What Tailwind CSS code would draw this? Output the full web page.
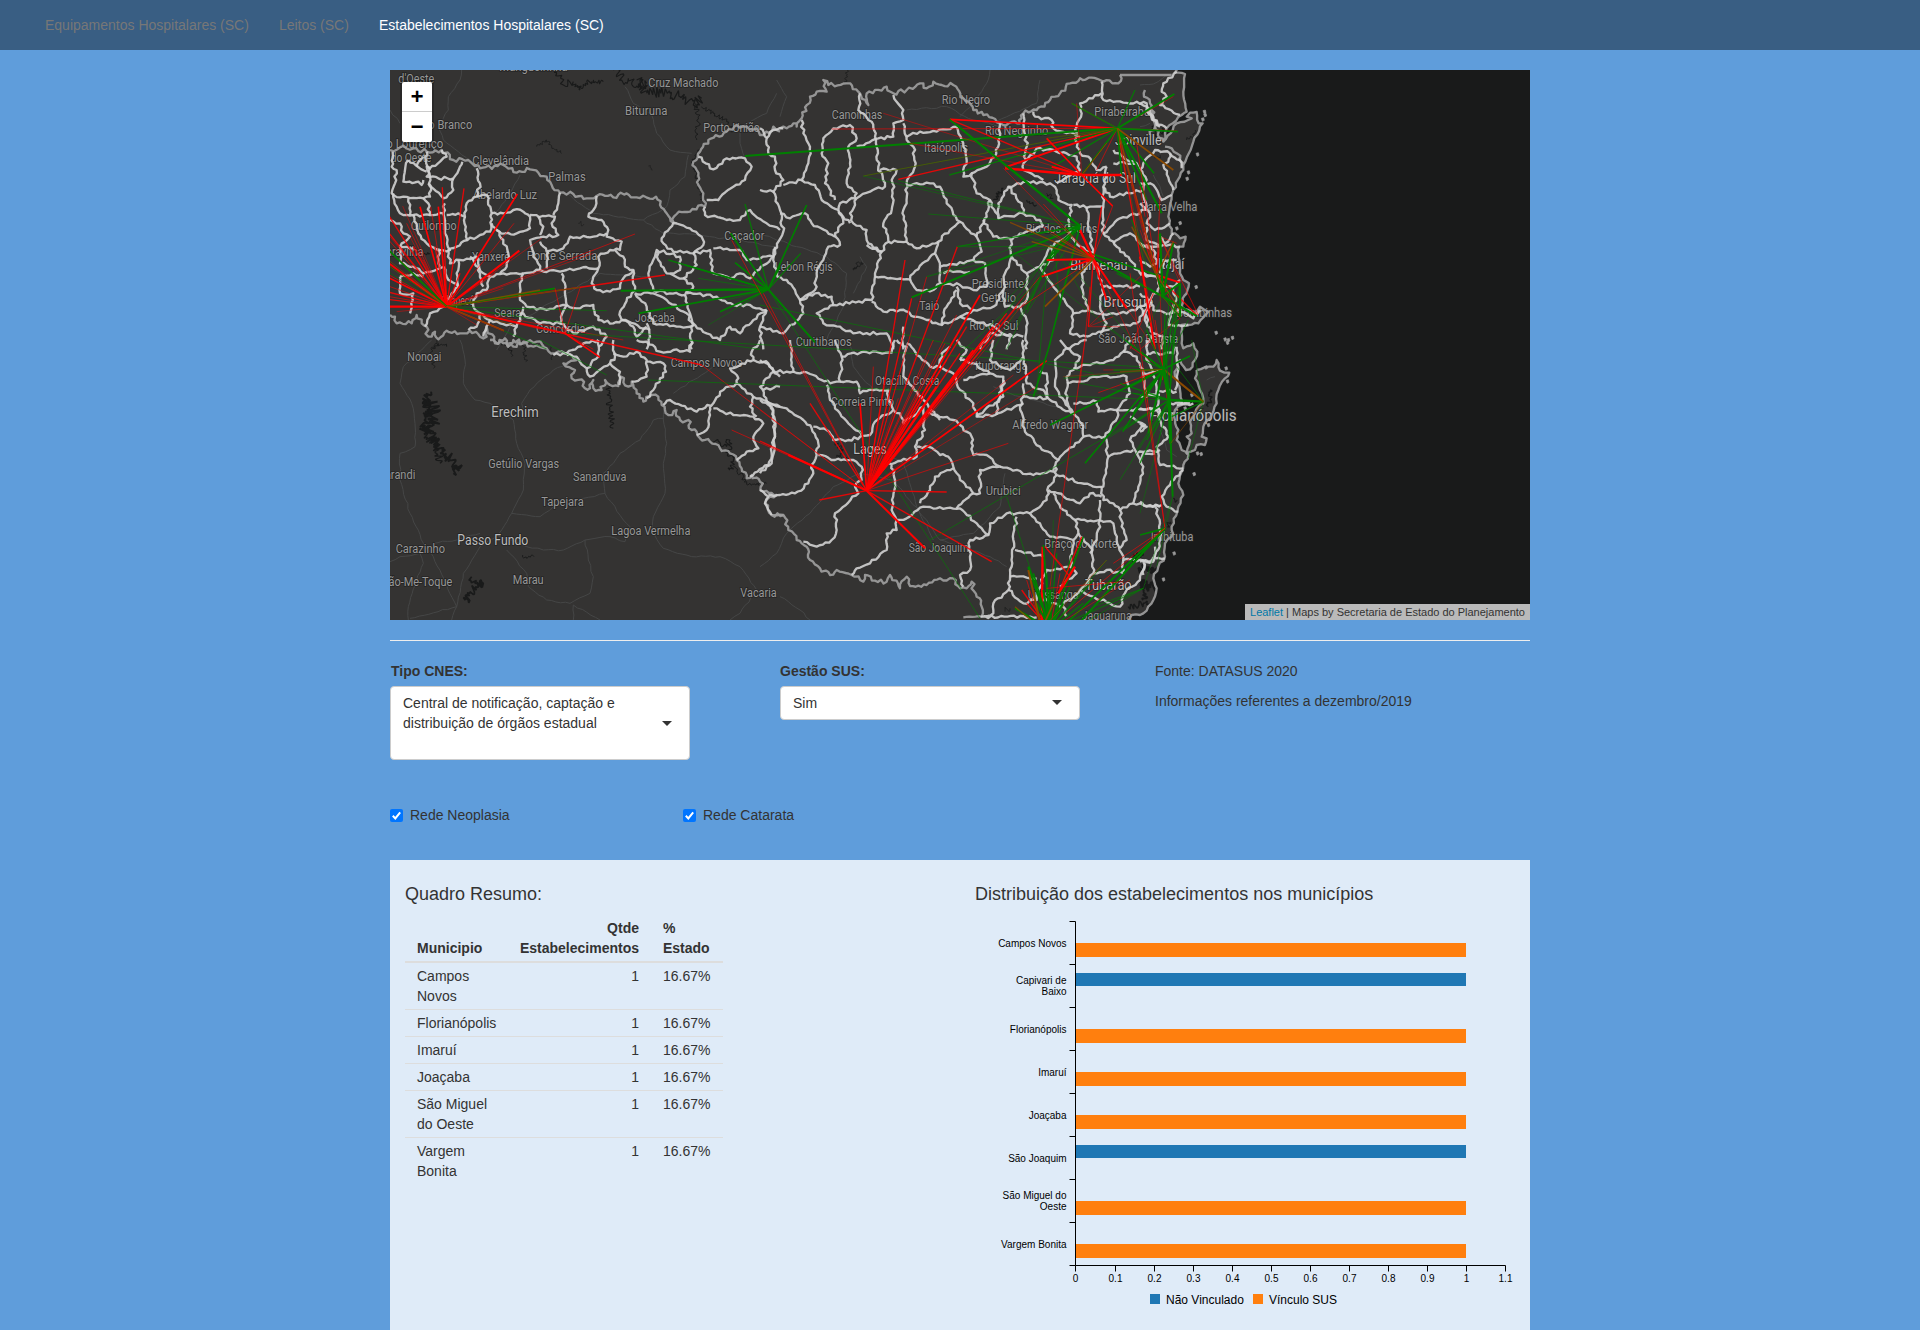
<!DOCTYPE html>
<html lang="pt-BR">
<head>
<meta charset="utf-8">
<title>Estabelecimentos Hospitalares (SC)</title>
<script src="https://cdn.jsdelivr.net/npm/@tailwindcss/browser@4"></script>
</head>
<body class="bg-[#5f9ddb] h-[1330px] overflow-hidden font-['Liberation_Sans',Arial,sans-serif] text-sm leading-5 text-[#333]">
<nav class="h-[50px] bg-[#395e83] flex items-center pl-[30px] text-[#777]">
  <a class="px-[15px]">Equipamentos Hospitalares (SC)</a>
  <a class="px-[15px]">Leitos (SC)</a>
  <a class="px-[15px] text-white">Estabelecimentos Hospitalares (SC)</a>
</nav>
<main class="w-[1140px] mx-auto pt-5">
  <section class="relative h-[550px] bg-[#191a1a] overflow-hidden">
    <svg id="map" class="block" width="1140" height="550" viewBox="30 30 3420 1650"></svg>
    <div class="absolute left-3 top-3 w-[30px] rounded-[2px] bg-white text-black shadow-[0_0_0_2px_rgba(0,0,0,0.2)] flex flex-col font-['Liberation_Mono',monospace] font-bold text-[22px]">
      <div class="h-[30px] border-b border-[#ccc] flex items-center justify-center pt-1">+</div>
      <div class="h-[30px] flex items-center justify-center pt-1">−</div>
    </div>
    <div class="absolute right-0 bottom-0 h-4 bg-white/70 px-[5px] text-[11px] leading-4 whitespace-nowrap"><a class="text-[#0078a8]">Leaflet</a> | Maps by Secretaria de Estado do Planejamento</div>
  </section>
  <hr class="mt-5 border-t border-[#eee]">
  <section class="flex pt-5">
    <div class="w-[390px]">
      <div class="font-bold mb-[5px] pl-px">Tipo CNES:</div>
      <div class="w-[300px] h-[74px] bg-white border border-[#ccc] rounded flex items-center justify-between pl-3 pr-[17px]">
        <div class="w-[230px] h-[60px]">Central de notificação, captação e distribuição de órgãos estadual</div>
        <svg width="10" height="5"><path d="M0 0H10L5 5Z" fill="#333"/></svg>
      </div>
    </div>
    <div class="w-[375px]">
      <div class="font-bold mb-[5px]">Gestão SUS:</div>
      <div class="w-[300px] h-[34px] bg-white border border-[#ccc] rounded flex items-center justify-between pl-3 pr-[17px]">
        <div>Sim</div>
        <svg width="10" height="5" class="mb-px"><path d="M0 0H10L5 5Z" fill="#333"/></svg>
      </div>
    </div>
    <div>
      <p class="mb-[10px]">Fonte: DATASUS 2020</p>
      <p>Informações referentes a dezembro/2019</p>
    </div>
  </section>
  <section class="flex mt-[45px] h-5">
    <label class="w-[293px] flex items-center gap-[7px]"><svg width="13" height="13" viewBox="0 0 13 13"><rect width="13" height="13" rx="2" fill="#0075ff"/><path d="M2.8 6.8L5.3 9.4L10.2 3.3" fill="none" stroke="#fff" stroke-width="2"/></svg>Rede Neoplasia</label>
    <label class="flex items-center gap-[7px]"><svg width="13" height="13" viewBox="0 0 13 13"><rect width="13" height="13" rx="2" fill="#0075ff"/><path d="M2.8 6.8L5.3 9.4L10.2 3.3" fill="none" stroke="#fff" stroke-width="2"/></svg>Rede Catarata</label>
  </section>
  <section class="mt-[35px] h-[480px] bg-[#dfebf8] flex px-[15px] pt-6">
    <div class="w-[570px]">
      <h4 class="text-lg leading-5">Quadro Resumo:</h4>
      <table class="mt-[11px] w-[318px] table-fixed border-collapse">
        <colgroup><col class="w-[102px]"><col class="w-[144px]"><col class="w-[72px]"></colgroup>
        <thead><tr class="border-b-2 border-[#ddd] align-bottom">
          <th class="text-left px-3 py-[3px]">Municipio</th><th class="text-right px-3 py-[3px]">Qtde Estabelecimentos</th><th class="text-left pl-3 py-[3px]">%<br>Estado</th></tr></thead>
        <tbody id="rows" class="align-top"></tbody>
      </table>
    </div>
    <div class="w-[540px]">
      <h4 class="text-lg leading-5">Distribuição dos estabelecimentos nos municípios</h4>
      <svg id="chart" class="block mt-[6px]" width="555" height="420" viewBox="975 910 555 420" font-size="10"></svg>
    </div>
  </section>
</main>
<script>
const NS='http://www.w3.org/2000/svg';
function el(parent,name,attrs,text){const e=document.createElementNS(NS,name);for(const k in attrs)e.setAttribute(k,attrs[k]);if(text!=null)e.textContent=text;parent.appendChild(e);return e}

/* ---- summary table ---- */
['Campos Novos','Florianópolis','Imaruí','Joaçaba','São Miguel do Oeste','Vargem Bonita'].forEach((n,i)=>{
  const tr=document.createElement('tr');
  if(i)tr.className='border-t border-[#ddd]';
  tr.innerHTML='<td class="px-3 py-[3px]">'+n+'</td><td class="px-3 py-[3px] text-right">1</td><td class="pl-3 py-[3px]">16.67%</td>';
  document.getElementById('rows').appendChild(tr);
});

/* ---- bar chart ---- */
const chart=document.getElementById('chart');
[['Campos Novos',1],['Capivari de|Baixo',0],['Florianópolis',1],['Imaruí',1],['Joaçaba',1],['São Joaquim',0],['São Miguel do|Oeste',1],['Vargem Bonita',1]].forEach(([n,sus],i)=>{
  const y=921.5+43*i,parts=n.split('|');
  parts.forEach((p,j)=>el(chart,'text',{x:1066.5,y:parts.length>1?y+19.5+11*j:y+25.5,'text-anchor':'end',fill:'#000'},p));
  el(chart,'rect',{x:1076,y:sus?y+21.5:y+8.5,width:390,height:sus?14:13,fill:sus?'#ff7f0e':'#1f77b4'});
});
let axis='M1069.5 921.5H1075.5V1265.5H1069.5M1075.5 1271.5V1265.5H1505.5V1271.5';
for(let i=1;i<8;i++)axis+='M1069.5 '+(921.5+43*i)+'H1075.5';
for(let i=0;i<=11;i++){const x=i==0?1075.5:i==11?1505.5:Math.ceil(1075+39.09*i)+.5;if(i&&i<11)axis+='M'+x+' 1265.5V1271.5';el(chart,'text',{x:x,y:1282,'text-anchor':'middle',fill:'#000'},String(i/10))}
el(chart,'path',{d:axis,fill:'none',stroke:'#000'});
el(chart,'rect',{x:1150,y:1294,width:10,height:10,fill:'#1f77b4'});
el(chart,'text',{x:1166,y:1304,'font-size':12,fill:'#000'},'Não Vinculado');
el(chart,'rect',{x:1253,y:1294,width:10,height:10,fill:'#ff7f0e'});
el(chart,'text',{x:1269,y:1304,'font-size':12,fill:'#000'},'Vínculo SUS');

/* ---- map: six tiles, each with its own origin ---- */
const map=document.getElementById('map');
const off={A:[0,0],B:[1140,0],C:[2280,0],D:[0,840],E:[1140,840],F:[2280,840]};
let seed=7;const rnd=()=>(seed=(seed*16807)%2147483647)/2147483647-.5;
const pts=(s,t)=>s.trim().split(/\s+/).map(p=>{const q=p.split(',');return[+q[0]+off[t][0],+q[1]+off[t][1]]});
function rough(p,amp,step){const o=[p[0]];for(let i=1;i<p.length;i++){const[a,b]=p[i-1],[c,d]=p[i],L=Math.hypot(c-a,d-b),n=Math.max(1,Math.round(L/step));for(let k=1;k<n;k++){const f=k/n,r=rnd()*amp*2;o.push([a+(c-a)*f-(d-b)/L*r,b+(d-b)*f+(c-a)/L*r])}o.push(p[i])}return o}
const dOf=p=>'M'+p.map(q=>q[0].toFixed(1)+','+q[1].toFixed(1)).join('L');

const coast=[...pts('110,0 110,30 105,38 135,42 130,95 140,155 125,165 80,205 70,245 110,190 155,175 140,170 150,158 170,156 176,190 188,190 160,245 130,315 130,330 100,390 95,405 85,470 95,520 105,520 120,535 137,530 130,560 118,560 115,590 120,640 130,660 147,670 140,700 128,715 125,740 165,760 180,740 205,755 175,790 145,795 125,795 125,850 130,865 160,850','C'),
...pts('160,10 172,35 165,60 150,88 138,90 120,60 112,70 105,110 120,150 125,195 105,210 105,240 115,270 110,300 125,330 145,345 130,375 125,395 115,430 130,465 115,500 112,515 95,560 95,590 75,610 75,650 55,680 40,715 50,745 40,780 10,820 0,825','F'),...pts('1115,825 1100,860','E')];
const isle=pts('170,90 220,80 230,60 240,92 268,98 255,115 235,150 230,190 215,225 190,260 185,290 200,295 195,315 170,315 165,330 140,340 150,300 140,290 155,280 150,245 165,220 175,200 190,190 180,150 165,115 170,90','F');
const coastR=rough(coast,3.5,12),isleR=rough(isle,3.5,12);
el(map,'path',{d:dOf([[0,0],...coastR,[0,1720]]),fill:'#343332'});
el(map,'path',{d:dOf(isleR),fill:'#343332'});

/* roads */
const roads={A:'245,30 240,60 205,110 205,150 175,200 190,240 280,310|735,80 760,130 815,165 830,220 870,270 935,280|30,150 60,190|925,285 915,350 870,390 860,440 790,480 640,460 560,400|790,480 850,520 960,525 1190,560|1190,100 1160,160 1080,200 1080,250 1095,295|350,870 390,800 560,700 660,640 800,650|420,345 390,400 340,470',B:'0,520 110,560 200,590 260,640 250,740 200,840|50,60 80,110 60,170|690,30 680,70 640,130 600,170|300,590 320,620 280,700|840,60 830,130 700,190|440,150 560,140 640,180 760,210 900,220',C:'40,345 60,380 70,410|0,75 40,72 80,45|0,200 30,190',
D:'155,0 125,30 70,80 60,130 95,190 105,250 105,320 60,340 60,420 90,520 130,610 160,650 230,800 215,840|30,665 60,650 120,640 130,670 110,720 85,800 85,840|240,0 255,60 250,130 285,180 330,190 400,240 410,310 435,370 430,450 395,520 350,590 300,620 250,700 230,800 90,835|395,520 440,525 480,530 520,500 610,475 675,460|850,235 820,240 780,300 720,340 700,370 670,400 675,460 730,540 750,560 735,605 690,590 615,600 550,630 490,630 440,620 350,585|850,190 850,240 860,310 850,370 855,460 820,530 815,570 850,625 935,650 1020,650 1080,680 1130,750 1080,820 1050,840|615,600 625,660 640,710 630,760 570,790 500,780 445,740 440,700 380,630|580,795 580,840|580,795 660,840|430,240 425,190 450,150 520,90 600,50|160,610 230,600 300,580|880,160 940,120 1000,80',E:'0,680 50,640 80,580 150,520 220,440 300,400 400,420 500,540 540,600 690,650 740,680|270,0 280,80 340,150|360,330 430,370 470,500 520,600|540,600 640,580 720,500 735,400|60,770 120,810 150,840|890,200 780,170 700,140',F:'60,270 80,330 110,350|20,700 60,640|200,120 225,110'};
for(const t in roads)roads[t].split('|').forEach(s=>el(map,'path',{d:dOf(rough(pts(s,t),2.5,15)),fill:'none',stroke:'#454646','stroke-width':3,'stroke-linejoin':'round'}));

/* rivers, reservoirs, lagoons */
const water=[['A','530,30 550,75 580,65 600,90 640,60 670,65',14,6],['A','700,30 725,60 745,55 760,80 800,70',20,6],['A','770,60 800,100 860,95 900,110 940,135 965,115',22,7],['A','945,130 955,170 950,240',10,5],['A','965,140 1000,160 1040,185 1060,215',9,5],['A','470,260 500,240 515,260 545,280',6,4],['A','805,318 818,330',7,3],['A','595,490 612,492',9,3],['A','120,580 150,580',8,6],['A','960,270 935,310 965,400 970,435',8,5],['A','155,868 175,850 200,860',9,5],['D','155,155 130,190 150,210 130,250 150,280 175,310 190,340 220,360 240,385 220,400',22,10],['D','145,180 155,230 140,280',38,10],['D','140,280 175,330 180,370',22,7],['D','175,0 155,30 160,85',7,4],['D','330,0 390,15 395,50',8,5],['D','430,10 437,65',8,4],['D','512,20 516,60',4,4],['D','685,140 690,200 700,265',13,6],['D','428,645 440,655 462,650',8,5],['D','275,710 290,730 310,730 270,755 255,780 270,780',17,9],['D','1000,305 1040,320 1050,300 1045,340 1060,365 1050,390',14,6],['D','1060,380 1100,425 1110,430 1160,430',10,5],['E','0,430 15,432',11,4],['E','225,310 250,330 230,350 270,365',12,5],['E','735,815 750,805',14,4],['E','1120,650 1150,640 1120,670',16,8],['E','1105,800 1150,790 1170,800',14,8],['E','1140,700 1165,680 1190,700 1195,740 1160,745 1140,730',22,12],['F','0,720 20,735 10,780',20,10],['F','210,150 212,175 205,200',11,8],['F','100,475 112,480',16,6],['F','80,560 90,545',12,6],['B','730,385 700,420',12,7],['B','800,420 830,435',9,6],['B','860,400 880,415',8,5],['B','280,630 295,605 310,610 280,630',7,4],['B','262,30 255,70',6,4],['C','140,240 160,230 165,210',8,5],['C','35,200 60,225 80,210',17,6],['C','45,295 60,285',10,4]];
water.forEach(([t,s,a,w])=>el(map,'path',{d:dOf(rough(pts(s,t),a*.8,3.5)),fill:'none',stroke:'#191a1a','stroke-width':w*.55,'stroke-linejoin':'bevel'}));

/* place names: tile, text, x, baseline, width, size */
const labels=[['A',"d'Oeste",55,66,108],['A','Mangueirinha',358,32,205],['A','Cruz Machado',805,78,210],['A','Bituruna',735,164,127],['A','Porto União',970,213,170],['A','Pato Branco',95,206,182],['A','São Lourenço',-20,262,210],['A','do Oeste',32,304,122],['A','Clevelândia',277,312,170],['A','Palmas',505,361,112],['A','Abelardo Luz',278,414,193],['A','Quilombo',92,507,138],['A','Maravilha',-10,585,140],['A','Xanxerê',275,600,115],['A','Ponte Serrada',440,597,212],['A','Chapecó',182,734,100],['A','Seara',343,770,80],['A','Concórdia',468,818,148],['A','Joaçaba',765,783,120],['A','Caçador',1033,538,120],
['B','Canoinhas',215,174,152],['B','Rio Negro',545,131,145],['B','Itaiópolis',492,273,132],['B','Rio Negrinho',675,223,190],['B','Pirabeiraba',1003,167,167],['B','Joinville',1065,254,140,42],['B','Jaraguá do Sul',883,367,245,42],['B','Rio dos Cedros',797,517,215],['B','Blumenau',930,629,173,42],['B','Presidente',635,682,157],['B','Getúlio',663,724,105],['B','Brusque',1030,738,150,42],['B','Lebon Régis',45,632,173],['B','Taió',478,748,60],['B','Rio do Sul',628,808,147],['B','Curitibanos',107,857,168],['B','São João Batista',1015,847,240],['B','Barra Velha',1142,452,170],['C','Itajaí',55,624,78,42],['C','Bombinhas',108,770,168],
['D','Nonoai',82,62,102],['D','Erechim',334,230,142,42],['D','Getúlio Vargas',325,383,212],['D','Sananduva',579,422,160],['D','Sarandi',-5,416,111],['D','Tapejara',484,496,127],['D','Passo Fundo',232,612,213,42],['D','Lagoa Vermelha',694,583,237],['D','Carazinho',47,638,148],['D','Não-Me-Toque',2,737,215],['D','Marau',398,731,93],['D','Vacaria',1081,770,109],['D','Campos Novos',872,80,215],
['E','Ituporanga',645,88,157],['E','Otacílio Costa',345,132,193],['E','Correia Pinto',212,197,190],['E','Lages',280,340,100,42],['E','Urubici',677,462,105],['E','Alfredo Wagner',757,265,228],['E','São Joaquim',446,634,180],['E','Braço do Norte',853,621,220],['E','Tubarão',975,747,140,42],['E','Urussanga',803,774,153],['E','Jaguaruna',965,837,150],['F','Florianópolis',28,242,262,50],['F','Imbituba',32,602,128]];
labels.forEach(([t,s,x,y,w,z])=>el(map,'text',{x:x+off[t][0],y:y+2+off[t][1],textLength:w,lengthAdjust:'spacingAndGlyphs','font-size':z||36,'font-family':'Roboto, sans-serif',fill:z?'#bdbdbd':'#979797',stroke:'#242424','stroke-width':5,'paint-order':'stroke'},s));

/* state outline */
const outline={A:['30,270 60,262 100,265 140,275 185,270 220,300 265,300 300,325 370,315 410,338 450,328 500,350 515,375 540,398 580,402 620,415 650,408 700,412 740,400 770,412 828,410 840,435 860,460 880,488 890,462 930,455 965,435 975,440 970,400 955,375 950,330 940,305 960,275 985,240 1040,215 1070,195 1100,200 1130,205 1140,225 1170,220 1180,200 1200,215','30,765 45,770 50,790 95,790 110,765 125,790 140,800 145,830 165,815 175,838 200,812 240,820 270,812 300,830 320,830 320,800 345,850 375,835 385,860 400,840 430,850 460,860 500,865'],
B:['60,205 80,205 100,190 110,200 125,175 150,110 170,95 200,95 190,60 205,75 260,70 300,100 325,135 320,100 380,80 400,100 440,90 480,70 500,85 520,65 545,75 580,75 610,115 640,150 670,165 720,190 780,190 790,160 830,150 870,120 900,100 930,70 960,55 1020,60 1030,65 1075,70 1080,45','1080,45 1082,45 1235,45'],
D:['330,0 370,10 400,20 430,5 470,5 500,25 525,40 555,40 575,45 590,60 550,70 585,90 575,115 605,118 615,145 630,145 640,120 640,145 665,150 675,120 690,135 715,138 722,110 745,140 755,125 770,160 790,185 815,165 835,170 845,195 865,225 890,210 900,240 925,240 935,270 950,275 960,295 990,305 1020,325 1050,340 1070,360 1085,385 1100,415 1115,405 1140,425 1150,455 1190,465 1170,470 1155,490 1175,525 1210,525'],
E:['35,525 70,525 85,570 110,600 140,620 150,660 180,685 210,705 230,690 275,705 310,725 315,705 345,722 380,725 390,705 420,745 440,710 450,738 500,735 540,715 580,715 600,745 620,745 635,725 650,770 665,800 665,830 610,832'],
C:['15,90 12,110 30,130 40,170 45,200 70,245','35,150 45,200 30,225','75,260 110,280 120,300','120,290 125,320']};
const gO=el(map,'g',{fill:'none',stroke:'#a0a0a0','stroke-opacity':.9,'stroke-width':7,'stroke-linejoin':'round'});
for(const t in outline)outline[t].forEach((s,i)=>el(gO,'path',{d:dOf(rough(pts(s,t),t=='B'&&i==1?0:7,9))}));
el(gO,'path',{d:dOf(coastR)});el(gO,'path',{d:dOf(isleR)});
[[193,155],[195,165],[188,178],[172,283],[145,337],[141,356],[120,489],[110,505],[168,681],[228,818],[255,838],[262,848],[277,833],[258,925],[262,964],[205,1095],[183,1182],[172,1180],[162,1242],[102,1480],[70,1558],[135,1045],[155,1005],[198,922],[265,840]].forEach(([x,y])=>el(map,'path',{d:`M${x+2276},${y-3}l7,-2l2,8l-6,3z`,fill:'#999',stroke:'#999','stroke-width':2}));

/* municipality borders */
const inner={A:`38,275 35,320 50,330 45,370 35,400 60,412 130,415 150,410 150,350 140,320 150,325 180,305 200,290 185,270|85,300 140,335|85,300 75,330 70,365 115,365 125,375 130,360|140,275 138,300 150,325|150,325 140,350 175,355 220,355 240,320 247,305|220,355 220,390 190,415 145,370|130,415 145,430 150,465 190,460 195,430|40,400 50,440 60,460 100,465 150,465|85,415 90,465|100,465 115,520 140,550 180,570 210,570 195,520 190,460|290,325 300,370 290,410 260,430 255,470 235,460 200,465|255,470 262,540 300,525 330,515 335,460 320,405 290,410|335,460 370,460 400,450 430,455 450,470 450,505 410,520 375,520 350,510 335,490|450,465 525,470 515,490 535,525 490,530 450,540 460,590 470,600|475,470 490,500 480,525|540,398 535,430 520,465|650,408 640,450 625,470 665,480 685,510 680,530 725,545 720,570 690,570 655,590 655,625 640,650 635,670 650,690 690,695 720,685 730,655 760,630 735,620 730,590 705,570|680,520 640,530 570,530 550,565 500,575 480,545|470,600 480,630 540,635 600,625 655,625|545,640 555,690 560,735 500,750 440,740 420,720 420,680 430,640 480,630|430,640 370,640 330,650 320,690 290,700 280,740 300,760 290,800 265,810|350,510 370,540 385,580 380,620 360,640|262,540 230,560 205,570 210,610 240,600 290,590 300,640 310,680|560,735 600,745 640,735 655,780 700,790 725,780 720,755 755,700 765,690 760,630|725,780 760,800 770,830 800,800|765,700 800,740 820,790 900,800 940,795 920,760 860,720 820,700 765,700|725,780 810,810|880,488 845,535 850,550 880,575 940,580 970,555 965,530 930,505 880,488|830,570 805,640 820,690 870,700 915,705 940,680 910,655 860,640 835,600 830,570 900,590 900,630 870,640|940,580 950,615 910,655|940,580 990,570 1000,640 1050,655 1080,640 1110,655 1180,590 1185,560|1000,565 1080,570 1100,600 1180,590|915,705 930,760 945,795 980,820 1020,840 1050,800 1080,820 1120,780 1160,750|920,700 1010,710 1060,735 1110,735 1160,750|940,795 930,830 935,868|800,790 810,830 800,868|975,440 975,465 1040,480 1080,480 1110,450 1160,490 1200,510|980,420 1015,420 1060,380 1095,360 1115,320 1095,295 1040,295 1000,328 955,290|60,650 60,700 100,700 90,760|60,650 100,640 130,650|100,565 60,560 60,610 100,620 130,640 190,620 200,650 235,680 215,700 190,740 150,760 135,800|30,480 60,490 70,520 90,530 60,560|300,760 330,780 360,790 410,800 420,770 430,740|310,830 330,780|410,800 400,830|420,760 480,790 540,790 560,735|540,790 580,820 640,800 680,830 655,860|175,570 180,620|235,600 230,640 235,680|1160,750 1140,800 1150,868|130,290 110,320|270,590 310,640 330,650|505,575 500,625`,
B:`0,205 20,235 25,280 45,290 45,330 70,360 40,395 0,390|20,235 40,210 70,205|125,180 130,220 150,260 145,310 125,360 70,375|125,360 165,375 185,420 235,450 240,430 285,415 290,400 260,370 270,310 265,260 290,235 270,195 220,205 190,235 185,280 205,310 195,370 225,420|300,100 295,150 335,185 345,230 355,320 375,380 330,395 290,415 270,460 280,490 320,510 325,550 365,575 385,545 370,490 395,450 400,350 410,330 360,330|290,260 355,235 400,230 400,190 430,180 430,150 400,105|430,190 440,240 460,260 465,320 440,370 440,430 430,450 440,545 470,565 535,545 570,510 600,485 560,430 540,380 510,370 440,375|385,545 440,545|440,230 480,215 530,215 590,200 610,260 620,300 610,350 635,340 650,400 690,420 680,470 650,530 665,575 640,600 540,620 525,580 535,545|635,340 680,320 705,290 715,240 720,190|670,480 700,530 750,535 755,590 735,640 730,690|690,420 715,475 715,430 745,380 800,365 870,370 890,390 895,420 935,435 925,480 930,520 870,560|745,380 785,430 790,460 840,480 850,500|715,475 790,460|600,485 650,530|235,450 250,490 225,520 240,555 205,560 190,600 170,640 165,690 120,720 105,690 80,660 50,650|40,395 60,450 70,515 40,580 50,650|60,460 90,475 135,460 155,490 225,530|320,555 365,575 345,650 335,720 220,735 215,710 165,700 120,720 130,760 70,820 0,800|235,455 270,490|345,650 450,658 460,640 525,580|450,658 470,690 520,690 540,670 540,620|540,670 600,675 640,690 680,680 675,610 640,600|590,680 600,730 640,750 700,740 730,690|335,725 370,755 420,750 500,780 545,795 560,740 590,690|220,735 170,760 190,790 240,800 280,820 380,820 400,868|730,690 735,740 780,740 800,780 800,868|755,590 800,640 840,620 870,560|755,540 790,520 850,500|800,640 800,720 780,740|840,620 880,680 940,760 930,820 980,830|790,160 800,260 790,330 850,360|820,155 825,170 875,180 880,205 960,230|800,300 830,265 880,270 950,290 960,330 890,370|1025,65 1030,120 1160,130 1165,160 1200,200|1025,100 960,130 965,160 950,200 945,240 960,280 985,290 1010,330 1040,320|1040,320 1030,380 1050,410 1110,400 1150,390 1160,360 1130,310 1060,310|1030,380 1030,440 990,440 940,435|1030,440 1030,520 1070,560 1110,600 1140,640 1200,650|1030,520 1080,475 1140,460 1160,440 1150,400|1060,550 1110,520 1150,560 1200,560|980,440 985,500 1000,590 965,640 970,700 985,750 1010,760 1100,760 1170,730|1000,600 1030,680 1090,680 1140,680|1030,680 1020,740 1040,790 1020,820|930,520 960,560 1000,580|940,760 985,750|600,770 700,800 750,830 740,868|545,795 600,770 640,750|430,800 430,868|660,868 690,820 790,830|980,830 1060,800 1130,790 1170,730|1060,270 1100,300 1130,310|870,560 880,600 840,620|550,640 570,632 630,636`,
C:`110,35 70,70 65,95 80,110 60,135 120,165|80,205 40,180 20,140 0,130|0,330 15,300 45,270 90,280 120,300 125,325|90,280 85,305 70,315 100,390|0,370 40,375 55,400 65,420 95,405|0,430 30,460 20,490 45,510 90,490|20,500 20,540 60,560 100,555 120,560|60,530 75,550 100,520|0,550 40,570 50,610 30,620 0,600|0,645 50,650 60,680 100,680 120,660|60,680 30,720 40,750 90,760 120,750|90,760 85,795 145,795|0,700 25,720 20,750 20,790 40,820 20,860|110,600 70,600 60,640|120,755 160,775 180,750|0,740 20,790|40,820 70,830 65,868|100,680 110,720 90,760`,
D:`520,45 560,40 610,10 655,0|560,45 590,50 620,85 630,110 690,70 705,50 700,0|655,0 655,50 620,85|690,70 720,95 718,135|700,40 730,50 770,35 800,60 800,110 755,125|770,0 800,5 840,35 880,30 930,35 935,0|800,65 850,70 858,95 840,115 820,150 800,175|850,195 870,180 950,215 1000,190 1030,150 1070,130 1075,115 1050,85 1085,70 1120,60 1115,35 1140,0|1120,60 1160,70 1200,110|990,200 990,225 980,270 950,285|1000,205 1060,225 1120,230 1150,250 1120,290 1135,325 1100,335 1070,360|1070,130 1120,170 1150,180 1200,200|1170,195 1185,240 1185,290 1165,375 1110,410|1150,150 1200,140|1120,170 1110,200 1130,230`,
E:`0,60 25,70 40,95 80,95 100,95 95,50 90,0|100,95 160,105 210,130 240,125 245,50 225,0|245,50 310,35 395,38 405,0|240,125 290,125 300,160 340,150 385,150 385,180 400,210 345,245 330,285 265,300 220,300 200,270 160,260|200,135 210,180 240,220 265,250 305,285|20,185 80,205 130,240 155,265 175,310 170,345 155,375 160,400 145,430 105,460 60,465 25,465|40,95 0,140 20,185|0,180 35,200 45,290 35,370 0,400|175,345 225,360 280,360 305,380 305,420 285,440 295,460 225,520 230,570 215,600 170,620 130,605|0,450 25,470 15,490 35,525|395,375 405,430 395,510 410,540 440,535 490,500 600,505 650,550 685,585 630,600 630,690 600,705 610,740|410,540 410,570 380,580 380,630 330,670 290,685 275,705|385,370 470,350 465,320 495,270 490,200 430,250 420,220 400,210|470,320 505,320 540,345 565,350 580,380 600,420 640,460 660,460 660,390 720,380 680,345 640,345 635,290 600,255 580,240 500,215|580,385 525,410 510,450 480,490|640,460 590,505|720,380 820,405 880,395 895,360 840,320 795,275 780,200 790,170|410,0 440,20 430,50 430,110 490,180 540,240|440,10 480,50 510,80 540,80 545,40 570,20|540,80 580,100 600,150 640,190 650,230 705,225 790,190|600,60 640,70 690,100 730,110 730,170 650,230|610,120 690,100|730,120 715,180 710,225|700,0 690,60 750,90 790,50 790,0|590,0 620,30 600,60|790,50 800,130 850,150 870,180 935,220 885,140 885,60 920,25 960,50 940,90 920,110 920,180 940,220 970,260 970,290 895,360|790,130 790,170 860,175 860,100 840,95|920,25 980,0|900,0 920,25|940,85 1000,70 1060,60 1090,35 1130,50 1150,100 1200,90|920,130 960,125 1000,110 1100,110 1110,160 1070,210 1015,215 1010,185 940,190|1070,210 1075,225 1035,290 970,290|1035,290 1045,350 1030,440 1000,440 890,405 885,380|1070,210 1200,205|1110,230 1155,255 1110,300 1130,340 1200,330|1045,350 1120,330|1130,340 1150,380 1135,440 1120,490 1200,500|890,405 865,440 860,480 810,520 840,550 870,590 940,600 955,580 945,540 910,510 880,460|865,450 940,480 960,490 990,460 1025,470|1025,440 1030,480 1060,490 1080,510 1120,490|1020,480 1020,540 1060,550 1070,600 1090,660 1180,665 1185,620|1080,510 1085,560 1100,600 1080,625|945,540 1020,540|955,580 990,620 1000,660 1000,700 960,750 900,800|940,600 930,680 860,690 850,710|685,585 690,550 740,520 810,520|770,530 760,600 755,680 745,750 700,790 700,820 665,830 830,832|765,630 850,650|750,710 830,715|745,750 790,790 830,780 850,710|1000,700 1040,690 1090,700 1090,660|960,750 1000,770 1050,790 1080,800 1100,750 1140,720 1155,670|1090,35 1110,0|1150,100 1160,160 1200,165|850,780 910,800 920,830|930,680 950,700 900,740|1020,540 1010,600 990,640`,
F:`20,0 20,60 50,120 50,150 110,155|20,40 100,40 105,20|110,20 115,90 105,150|0,170 60,165|0,205 50,210 60,240 85,290 50,320 60,375 130,385|45,340 10,340 0,370|130,390 90,435 65,470 80,500 115,515|65,495 20,500 0,485|45,500 60,550 60,600 45,655 75,655|0,665 45,660|10,665 10,705|50,150 60,240|90,190 150,190|110,195 150,195 160,190|0,250 20,260 0,275`};
const gI=el(map,'g',{fill:'none',stroke:'#d2d2d2','stroke-opacity':.9,'stroke-width':7,'stroke-linejoin':'round'});
for(const t in inner)inner[t].split('|').forEach(s=>el(gI,'path',{d:dOf(rough(pts(s,t),4.5,10))}));

/* patient flows: tile, hub x,y, colour, "x,y,width" list */
const R='#ff0000',G='#008000',O='#8a4a00';
const flows=[
['A',200,740,R,'187,382,4 252,385,4 412,402,5 402,490,3 418,572,6 485,535,2 765,522,2.5 640,580,2 855,645,4 68,438,2 120,440,5 152,440,3 175,440,5 80,490,3 0,425,4 0,485,4 0,510,3 30,530,2 90,530,2 0,590,5 0,630,3 0,640,5 30,680,3 0,690,4 0,705,3 0,715,4 0,740,7 50,755,2 290,795,2 372,812,5 480,807,3 730,840,2 560,820,4 370,685,2 345,640,3 165,560,4 130,600,3 240,640,4 100,560,4 60,600,3 80,640,3'],
['A',200,740,G,'0,545,5 30,640,2 525,685,5 600,682,3 680,752,3 500,867,2.5 1140,868,3 0,600,2'],
['A',200,740,O,'0,580,3 30,620,3 480,690,4 400,795,3 370,810,3'],
['A',555,820,R,'525,685,2.5 600,685,2.5 640,868,3'],
['A',1165,688,G,'1095,432,4 1052,520,5 865,600,4 955,655,3 915,615,5 1065,608,5 722,692,6 775,760,5 1020,755,5 985,795,2 970,690,6 1075,740,2 1040,720,2 1280,435,5 1262,580,4 1305,847,6 1800,1675,2.5 1200,620,5'],
['D',200,-100,R,'965,75,4'],['D',555,-20,R,'660,52,5'],['D',965,75,R,'1460,452,2.5'],['D',480,0,G,'680,105,2.5'],['D',560,-20,G,'2280,80,2.5'],['D',805,120,G,'2360,180,2.5'],['B',0,735,G,'1000,940,2.5'],
['B',-85,540,R,'320,1292,3'],
['B',320,1292,R,'0,1143,4 85,1185,6 -85,1110,3 0,1050,2 178,1320,4 560,1296,4 695,1505,4 495,1465,6 745,1150,2.5 860,902,5 830,980,2 150,1030,4 300,1030,5 340,920,3 375,950,2.5 415,1015,2 10,700,3 435,600,4 455,715,4 500,650,3 592,560,4 590,765,2.5 660,705,5 520,840,2.5 740,760,4 700,800,5 770,740,4 530,980,7 570,970,5 760,945,2 560,900,4 800,720,2 555,850,3 480,1000,4 640,870,5 670,840,4 840,650,3 620,800,4 600,880,4 430,900,3 500,900,3'],
['B',1072,205,R,'570,178,5 735,322,6 415,358,4 215,207,2.5 935,130,3 968,345,2 1010,330,3 1150,640,4 1185,640,3 1240,110,2 1175,620,2 860,235,2 1250,212,2'],
['B',1072,205,G,'-45,288,6 310,348,3 568,345,4 935,130,4 1125,90,4 1243,102,6 1254,215,5 870,325,4 965,345,5 1085,345,5 1182,340,5 1205,460,6 1160,420,5 1190,645,2 860,235,3'],
['B',1072,205,O,'1240,330,5 1190,640,4 1150,600,2 310,348,2'],
['B',965,345,R,'735,325,7 860,235,5 1085,345,7 1058,438,5 875,320,6 370,160,2 450,250,2 570,178,4 1040,250,3 950,130,2'],
['B',1058,438,R,'1000,590,3'],
['B',960,498,G,'568,178,5 590,195,6 745,320,5 415,362,3 505,462,2.5 592,560,4 455,712,6 310,348,2 500,650,2 865,868,5 860,600,5 870,600,5 840,520,4 740,720,3 800,760,3'],
['B',885,560,G,'800,750,4 770,790,3 740,868,3 600,560,3 700,868,2 900,760,3 960,498,6 780,520,3 720,780,3 500,650,1.5 1000,760,2 1140,868,2'],
['B',960,570,G,'1190,645,5 1210,710,5 1310,768,5'],
['B',860,640,G,'600,880,3 830,1000,3'],['B',865,868,G,'820,1010,5'],
['B',1000,597,R,'960,510,7 860,600,6 845,650,6 1040,720,6 1100,745,6 985,800,4 900,540,3 1025,440,4 770,750,2.5 850,432,3 960,560,6 850,500,3 1180,860,2 1130,870,2 730,325,2'],
['B',1000,597,O,'750,487,4 815,545,4 855,740,5 870,520,3'],
['B',985,800,R,'1150,640,1.5 1060,770,2 1080,800,2'],
['C',50,645,R,'120,668,6 170,765,4 100,545,3 60,540,4 68,708,5 -10,250,3 -30,340,3 120,770,3 0,510,2 60,410,2.5'],['C',60,530,R,'110,550,2 120,668,2 175,765,3'],
['C',0,380,R,'15,470,3'],['C',0,590,R,'45,868,6 25,750,3'],['C',40,700,R,'-30,868,3 10,770,2'],['C',120,775,R,'0,868,2 68,710,3'],
['C',68,708,G,'60,520,7 100,548,6 120,670,6 170,768,6 -70,640,4 50,640,6 120,770,4 90,600,5 0,850,2'],['C',120,670,G,'120,772,6 60,868,3 90,868,3'],['C',-25,480,G,'50,645,3 20,620,3'],['C',50,645,O,'-25,500,4 30,560,3 100,545,4 120,750,4'],
['C',70,928,R,'45,780,3 0,590,2 -30,860,3 60,700,2'],
['C',70,928,G,'75,760,4 105,740,4 115,780,4 145,780,3 -45,840,4 -100,800,3 20,810,4 150,888,5 0,875,5 90,690,3 -400,560,1.5'],
['F',70,88,R,'-125,158,2.5 0,112,3 90,240,3 65,120,5 -110,90,2'],
['F',70,88,G,'0,120,5 -230,115,3 -270,255,5 -165,370,5 -52,275,5 25,280,6 0,190,6 -120,180,4 -80,90,4 -30,140,5 88,180,9 -20,220,5 10,60,4 190,185,3'],['F',70,88,O,'190,185,6 -60,95,3 -230,110,2'],
['F',88,180,G,'190,185,7 70,80,9 92,310,10 98,470,6 0,370,4 -60,130,4 -180,130,3 -630,600,2.5 -50,270,4 -60,420,3 0,520,2 100,0,4 110,-80,4 45,340,3 -90,290,3 75,0,4 20,300,4 -10,330,3 -20,160,4'],
['F',190,185,G,'110,80,3 145,355,2 155,0,2 95,230,4'],['F',190,185,O,'92,310,3 120,130,4'],
['F',75,565,R,'0,70,3 -30,-200,3'],['F',98,470,G,'50,680,2 10,745,2'],
['E',975,0,R,'870,740,3 960,130,2'],['E',990,-160,R,'975,0,3'],
['F',75,565,G,'0,585,5 -200,868,6 -240,868,5 -170,800,4 -50,700,5'],['F',75,565,R,'-80,670,3 -260,850,2.5'],
['E',1150,745,G,'880,868,3 940,868,3 1000,800,3'],
['E',870,868,R,'785,750,4 965,600,3 800,790,4 900,700,3 1110,720,2'],['E',845,868,R,'848,620,7 800,720,3'],
['E',870,868,G,'805,680,7 765,805,6 850,615,5 970,590,5 1150,745,2 1040,660,3 935,645,4 740,470,3 880,540,2 820,700,5 890,640,4 870,750,7 910,790,6 830,790,6 1000,720,4 970,790,4 850,750,6 860,700,4 930,740,4'],
['E',895,760,R,'945,680,7 965,590,4'],['E',855,620,R,'930,710,4 910,680,3'],['E',860,745,R,'1090,725,3'],['E',845,868,O,'805,690,6 765,800,4 1040,660,3 880,790,5']];
flows.forEach(([t,x,y,c,list])=>list.split(' ').forEach(s=>{const[a,b,w]=s.split(',').map(Number),[ox,oy]=off[t];
  el(map,'line',{x1:x+ox,y1:y+oy,x2:a+ox,y2:b+oy,stroke:c,'stroke-width':Math.max(3,w),'stroke-opacity':w<2.3?.45:w<3.2?.6:w<4.2?.85:1})}));
</script>
</body>
</html>
